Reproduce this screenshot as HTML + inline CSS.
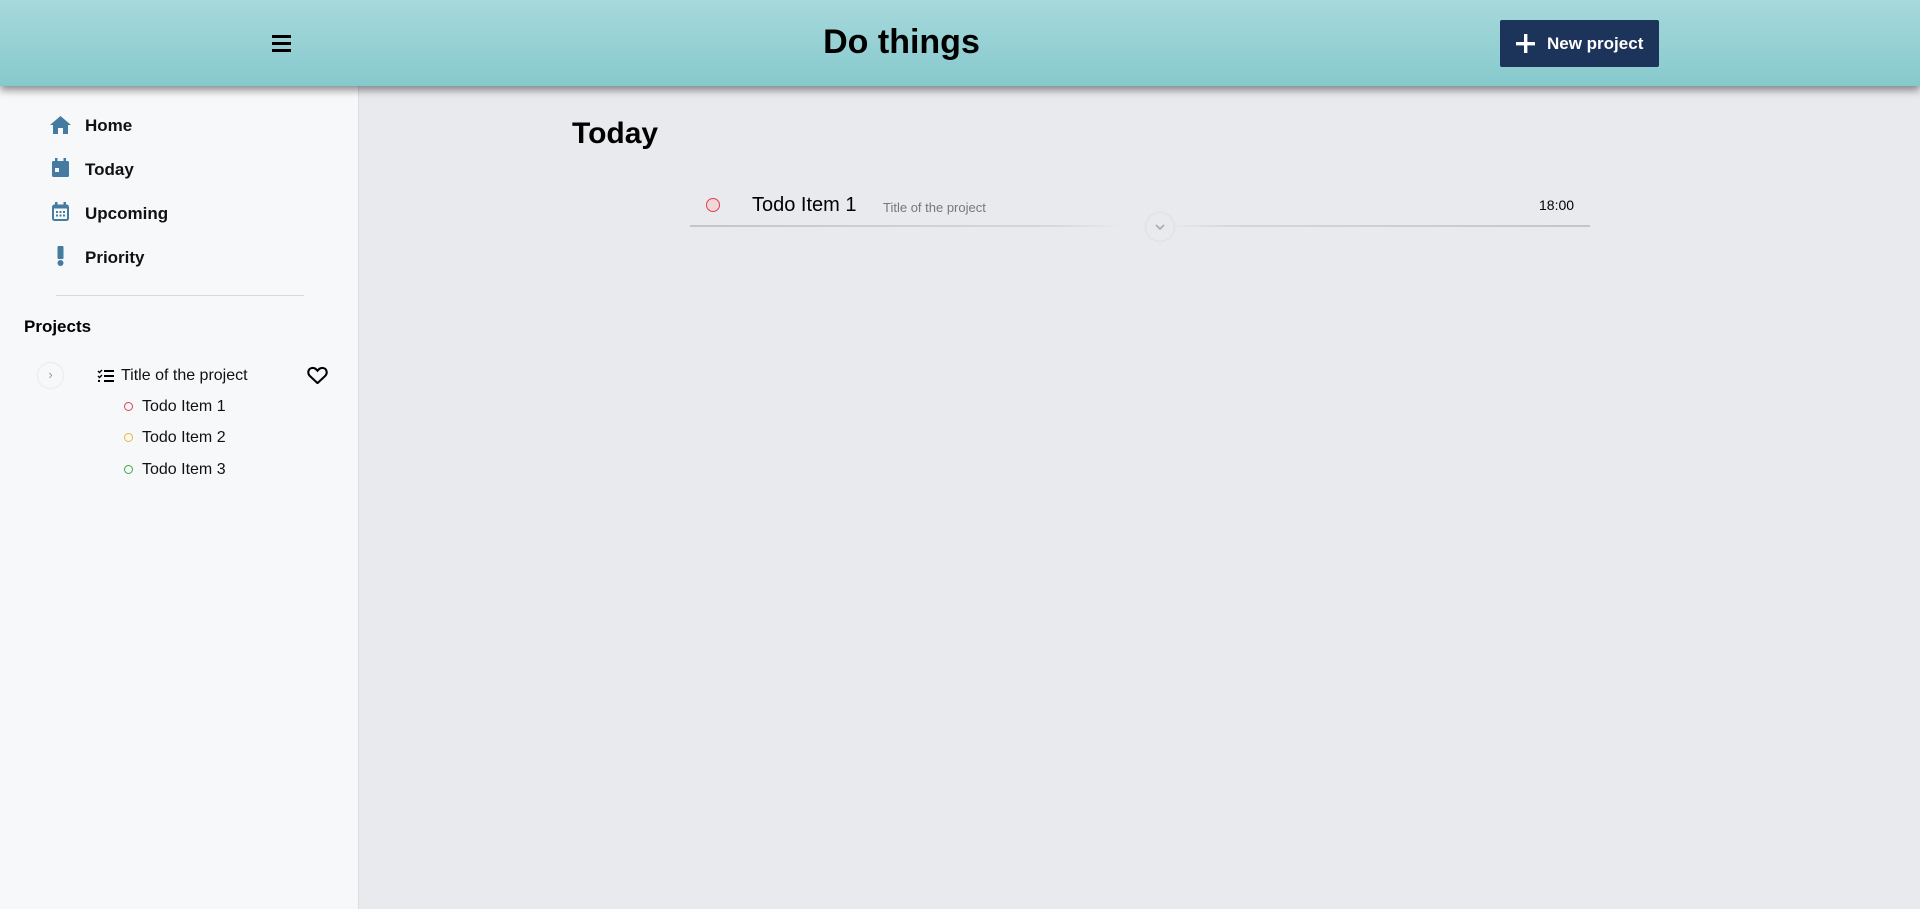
<!DOCTYPE html>
<html><head><meta charset="utf-8"><style>
*{box-sizing:border-box;margin:0;padding:0}
body{width:1920px;height:909px;overflow:hidden;background:#e9eaee;font-family:"Liberation Sans",sans-serif;position:relative}
.hdr{position:absolute;left:0;top:0;width:1920px;height:86px;background:linear-gradient(#a7d9dc,#86c9cc);box-shadow:0 4px 8px rgba(0,0,0,.45);z-index:3}
.side{position:absolute;left:0;top:86px;width:359px;height:823px;background:#f7f8fa;border-right:1px solid #dcdde0}
.abs{position:absolute}
.nav{position:absolute;left:85px;font-weight:bold;font-size:17px;color:#111}
.it{position:absolute;left:142px;font-size:16px;color:#111}
.dot{position:absolute;left:124px;width:9px;height:9px;border-radius:50%;border:1.5px solid}
</style></head><body>
<div class="hdr">
 <svg class="abs" style="left:272px;top:35px" width="19" height="17"><rect y="0" width="19" height="3" fill="#000"/><rect y="7" width="19" height="3" fill="#000"/><rect y="14" width="19" height="3" fill="#000"/></svg>
 <div class="abs" style="left:0;width:1803px;top:23px;text-align:center;font-size:34px;font-weight:bold;color:#000">Do things</div>
 <div class="abs" style="left:1500px;top:20px;width:159px;height:47px;background:#1c335a;border-radius:2px;color:#fff;font-weight:bold;font-size:17px;line-height:48px;padding-left:47px">New project
  <svg class="abs" style="left:16px;top:14px" width="19" height="19"><rect x="8" y="0" width="3.4" height="19" fill="#fff"/><rect x="0" y="8" width="19" height="3.4" fill="#fff"/></svg></div>
</div>
<div class="side">
 <svg class="abs" style="left:50px;top:30px" width="21" height="18" viewBox="0 0 21 18"><path d="M10.5 0L0 9h3v9h5v-6h5v6h5V9h3L10.5 0z" fill="#457ba0"/></svg>
 <div class="nav" style="top:30px">Home</div>
 <svg class="abs" style="left:52px;top:72px" width="17" height="19" viewBox="0 0 17 19"><rect x="3" y="0" width="2.5" height="4" fill="#457ba0"/><rect x="11.5" y="0" width="2.5" height="4" fill="#457ba0"/><rect x="0" y="3" width="17" height="16" rx="1.5" fill="#457ba0"/><rect x="3" y="10" width="4" height="4" fill="#f7f8fa"/></svg>
 <div class="nav" style="top:74px">Today</div>
 <svg class="abs" style="left:52px;top:116px" width="17" height="19" viewBox="0 0 17 19"><rect x="3" y="0" width="2.5" height="4" fill="#457ba0"/><rect x="11.5" y="0" width="2.5" height="4" fill="#457ba0"/><rect x="1" y="3.5" width="15" height="14.5" rx="1.5" fill="none" stroke="#457ba0" stroke-width="2"/><rect x="1" y="3.5" width="15" height="3" fill="#457ba0"/><g fill="#457ba0"><rect x="4" y="9" width="2" height="2"/><rect x="7.5" y="9" width="2" height="2"/><rect x="11" y="9" width="2" height="2"/><rect x="4" y="12.5" width="2" height="2"/><rect x="7.5" y="12.5" width="2" height="2"/><rect x="11" y="12.5" width="2" height="2"/></g></svg>
 <div class="nav" style="top:118px">Upcoming</div>
 <svg class="abs" style="left:57px;top:160px" width="7" height="20"><rect x="0.5" y="0" width="6" height="13" rx="1" fill="#457ba0"/><circle cx="3.5" cy="17" r="3" fill="#457ba0"/></svg>
 <div class="nav" style="top:162px">Priority</div>
 <div class="abs" style="left:56px;top:209px;width:248px;height:1px;background:#d8d9dc"></div>
 <div class="abs" style="left:24px;top:231px;font-weight:bold;font-size:17px;color:#000">Projects</div>
 <div class="abs" style="left:38px;top:277px;width:25px;height:25px;border-radius:50%;box-shadow:0 0 2px rgba(0,0,0,.15);color:#999;font-size:13px;text-align:center;line-height:24px">›</div>
 <svg class="abs" style="left:97px;top:283px" width="17" height="14" viewBox="0 0 17 14"><path d="M1 2l1.5 1.5L5 1M1 7l1.5 1.5L5 6" stroke="#000" stroke-width="1.4" fill="none"/><rect x="1" y="11" width="2" height="2" fill="#000"/><rect x="7" y="1" width="10" height="2" fill="#000"/><rect x="7" y="6" width="10" height="2" fill="#000"/><rect x="7" y="11" width="10" height="2" fill="#000"/></svg>
 <div class="abs" style="left:121px;top:281px;font-size:16px;color:#111">Title of the project</div>
 <svg class="abs" style="left:307px;top:280px" width="21" height="18" viewBox="0 0 24 21"><path d="M12 20L3 11.5C0 8.5 1 3 5.5 2.3 8.3 1.9 10.5 3.5 12 5.5 13.5 3.5 15.7 1.9 18.5 2.3 23 3 24 8.5 21 11.5z" fill="none" stroke="#000" stroke-width="2.4"/></svg>
 <div class="dot" style="top:316px;border-color:#e0404c"></div><div class="it" style="top:312px">Todo Item 1</div>
 <div class="dot" style="top:347px;border-color:#f0b43c"></div><div class="it" style="top:343px">Todo Item 2</div>
 <div class="dot" style="top:379px;border-color:#3ea84a"></div><div class="it" style="top:375px">Todo Item 3</div>
</div>
<div class="abs" style="left:572px;top:117px;font-size:30px;font-weight:bold;color:#000">Today</div>
<div class="abs" style="left:706px;top:198px;width:14px;height:14px;border-radius:50%;border:1.6px solid #e0404c;background:#f2d7da"></div>
<div class="abs" style="left:752px;top:194px;font-size:20px;color:#000">Todo Item 1</div>
<div class="abs" style="left:883px;top:200px;font-size:13px;color:#777">Title of the project</div>
<div class="abs" style="left:1539px;top:197px;font-size:14px;color:#000">18:00</div>
<div class="abs" style="left:690px;top:225px;width:900px;height:2px;background:linear-gradient(90deg,#c4c5c9,#d6d7da 40%,#e9eaee 48%,#e9eaee 53%,#d6d7da 60%,#c4c5c9)"></div>
<div class="abs" style="left:1146px;top:213px;width:28px;height:28px;border-radius:50%;box-shadow:0 0 2px rgba(0,0,0,.12)"><svg class="abs" style="left:9px;top:11px" width="10" height="6"><path d="M1 1l4 4 4-4" stroke="#aaa" stroke-width="1.6" fill="none"/></svg></div>
</body></html>
